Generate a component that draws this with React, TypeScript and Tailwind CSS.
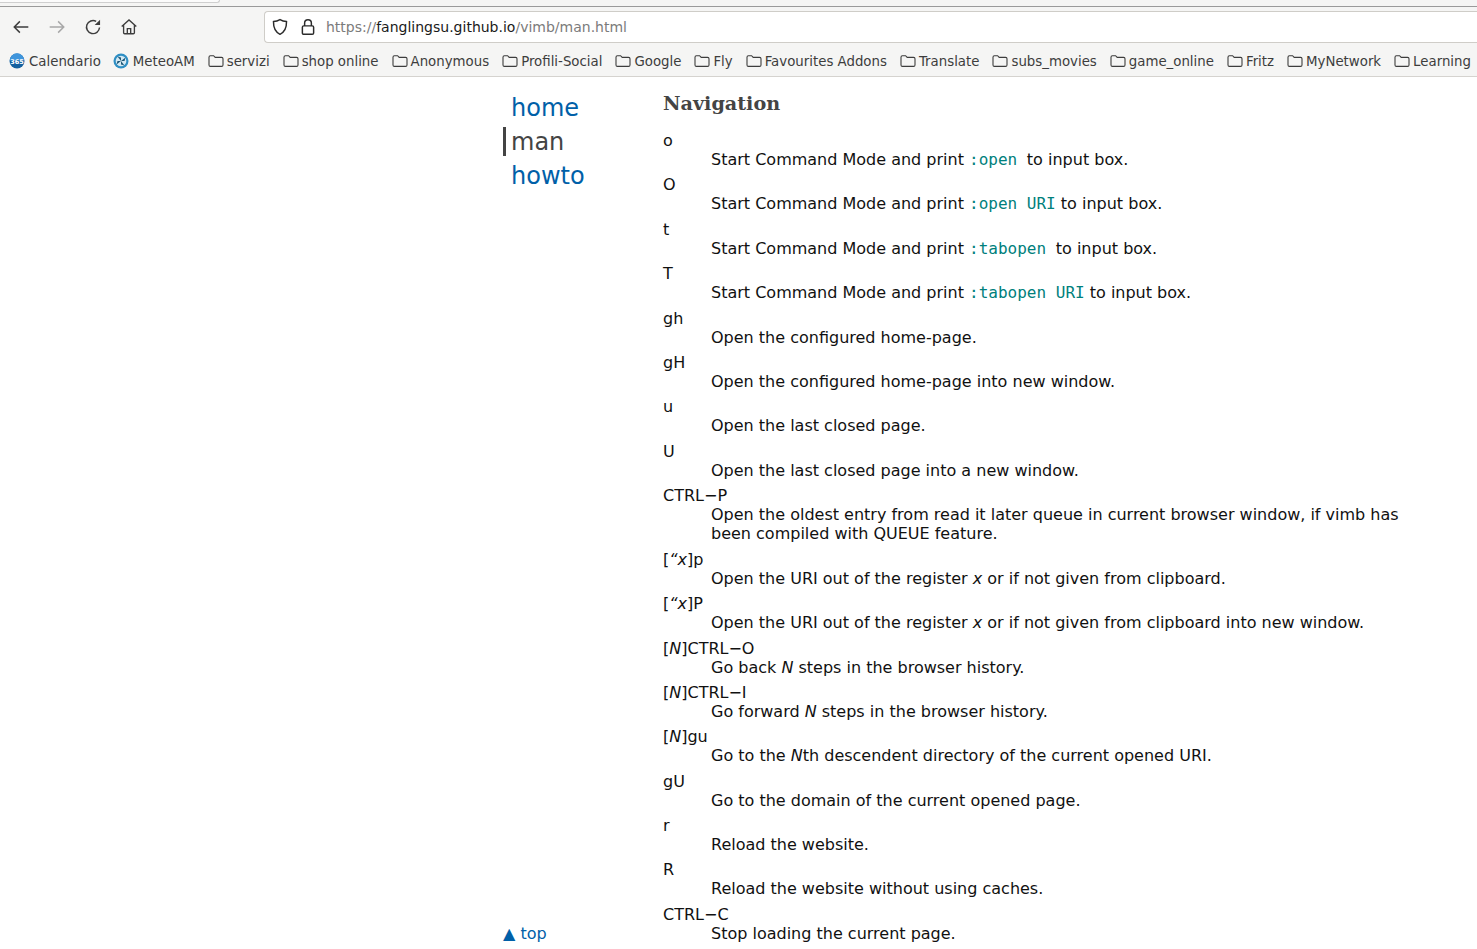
import React from "react";

const Folder = () => (
  <svg width="16" height="14" viewBox="0 0 16 14" fill="none" stroke="#3d3d3d" strokeWidth="1.1" className="shrink-0">
    <path d="M1 3.200c0-.9.6-1.500 1.400-1.500h3.200l1.600 1.700h6.400c.8 0 1.400.6 1.400 1.400v6.200c0 .8-.6 1.400-1.400 1.400H2.400c-.8 0-1.400-.6-1.400-1.400z" />
  </svg>
);

const bookmarks = ["servizi", "shop online", "Anonymous", "Profili-Social", "Google", "Fly", "Favourites Addons", "Translate", "subs_movies", "game_online", "Fritz", "MyNetwork", "Learning"];

const C = ({ children }: { children: React.ReactNode }) => (
  <code className="font-['DejaVu_Sans_Mono',monospace] text-[#00807c] text-[16px]">{children}</code>
);
const I = ({ children }: { children: React.ReactNode }) => <i>{children}</i>;

const entries: [React.ReactNode, React.ReactNode][] = [
  ["o", <>Start Command Mode and print <C>:open </C> to input box.</>],
  ["O", <>Start Command Mode and print <C>:open URI</C> to input box.</>],
  ["t", <>Start Command Mode and print <C>:tabopen </C> to input box.</>],
  ["T", <>Start Command Mode and print <C>:tabopen URI</C> to input box.</>],
  ["gh", "Open the configured home-page."],
  ["gH", "Open the configured home-page into new window."],
  ["u", "Open the last closed page."],
  ["U", "Open the last closed page into a new window."],
  ["CTRL−P", "Open the oldest entry from read it later queue in current browser window, if vimb has been compiled with QUEUE feature."],
  [<>[<I>“x</I>]p</>, <>Open the URI out of the register <I>x</I> or if not given from clipboard.</>],
  [<>[<I>“x</I>]P</>, <>Open the URI out of the register <I>x</I> or if not given from clipboard into new window.</>],
  [<>[<I>N</I>]CTRL−O</>, <>Go back <I>N</I> steps in the browser history.</>],
  [<>[<I>N</I>]CTRL−I</>, <>Go forward <I>N</I> steps in the browser history.</>],
  [<>[<I>N</I>]gu</>, <>Go to the <I>N</I>th descendent directory of the current opened URI.</>],
  ["gU", "Go to the domain of the current opened page."],
  ["r", "Reload the website."],
  ["R", "Reload the website without using caches."],
  ["CTRL−C", "Stop loading the current page."],
];

export default function App() {
  return (
    <div className="h-screen overflow-hidden bg-white font-['DejaVu_Sans',sans-serif] text-[16px] leading-[19.2px] text-[#111] flex flex-col">
      <header className="bg-[#f5f5f4] shrink-0 h-[77px] border-b border-[#d5d3cf] flex flex-col">
        <div className="h-[7px] border-b border-[#9a9a9a] shrink-0">
          <div className="h-[3px] w-[220px] bg-[#fbfbfb] border-b border-r border-[#cfcfcf] rounded-br-sm" />
        </div>
        <div className="flex items-center h-[40px] shrink-0 pl-[12px]">
          <svg width="18" height="18" viewBox="0 0 16 16" fill="none" stroke="#3d3d3d" strokeWidth="1.3" className="mr-[18px]"><path d="M14.500 8H2M7 3 2 8l5 5" /></svg>
          <svg width="18" height="18" viewBox="0 0 16 16" fill="none" stroke="#a8a8a8" strokeWidth="1.3" className="mr-[18px]"><path d="M1.500 8H14M9 3l5 5-5 5" /></svg>
          <svg width="18" height="18" viewBox="0 0 16 16" fill="none" stroke="#3d3d3d" strokeWidth="1.3" className="mr-[18px]"><path d="M13.800 8.500A5.800 5.800 0 1 1 10.800 3" /><path d="M14.300 1.500v4.800H9.500z" fill="#3d3d3d" stroke="none" /></svg>
          <svg width="18" height="18" viewBox="0 0 16 16" fill="none" stroke="#3d3d3d" strokeWidth="1.2" className="mr-[126px]"><path d="M1.500 7.600 8 1.800l6.500 5.800M3.200 6.500V13c0 .6.4 1 1 1h7.600c.6 0 1-.4 1-1V6.500M6.500 14V9.500h3V14" /></svg>
          <div className="flex-1 h-[32px] bg-white border border-[#cfcdc8] border-r-0 rounded-l-[4px] flex items-center pl-[6px] -mr-px">
            <svg width="18" height="18" viewBox="0 0 16 16" fill="none" stroke="#2b2b2b" strokeWidth="1.3" className="mr-[11px] shrink-0"><path d="M8 1.500c2 1.200 3.800 1.600 5.800 1.700.1 5.300-1.500 9.300-5.800 11.300C3.700 12.500 2.100 8.500 2.200 3.200c2-.1 3.800-.5 5.800-1.700z" /></svg>
            <svg width="16" height="18" viewBox="0 0 14 16" fill="none" stroke="#2b2b2b" strokeWidth="1.300" className="mr-[10px] shrink-0"><rect x="2" y="7" width="10" height="7.500" rx="1.200" /><path d="M4 7V4.500a3 3 0 0 1 6 0V7" /></svg>
            <span className="text-[14px] leading-[20px] text-[#7b7b7b] whitespace-nowrap">https://<span className="text-[#1a1a1a]">fanglingsu.github.io</span>/vimb/man.html</span>
          </div>
        </div>
        <div className="flex items-center flex-1 pl-[9px] text-[13.333px] text-[#3d3d3d] whitespace-nowrap gap-[13px] overflow-hidden">
          <span className="flex items-center gap-[4px] -mr-px">
            <svg width="16" height="16" viewBox="0 0 16 16"><circle cx="8" cy="8" r="7.500" fill="#14609f" /><path d="M.8 7.500a7.200 7.200 0 0 1 14.400 0z" fill="#3f95dc" /><text x="8" y="10.500" fontSize="6.500" fontWeight="700" fill="#fff" textAnchor="middle" fontFamily="'DejaVu Sans',sans-serif">365</text></svg>
            Calendario
          </span>
          <span className="flex items-center gap-[4px]">
            <svg width="16" height="16" viewBox="0 0 16 16"><circle cx="8" cy="8" r="7.500" fill="#2f8fc4" /><circle cx="8" cy="8" r="5.300" fill="#d4e9f3" /><path d="M8 8 4.500 3.500 8 4.500zM8 8l4.500-3.500-1 3.500zM8 8l3.500 4.500-3.500-1zM8 8l-4.500 3.500 1-3.500z" fill="#1f5878" /></svg>
            MeteoAM
          </span>
          {bookmarks.map((b) => (
            <span key={b} className="flex items-center gap-[3px]"><Folder />{b}</span>
          ))}
        </div>
      </header>
      <main className="relative flex-1 min-h-0 overflow-hidden flex pl-[503px]">
        <nav className="w-[160px] shrink-0 pt-[14px] text-[24px] leading-[34px]">
          <a className="block pl-[8px] text-[#0060a8]">home</a>
          <a className="block pl-[5px] pt-[1px] border-l-[3px] border-[#444] text-[#444] leading-[28px] mt-[2px] mb-[3px]">man</a>
          <a className="block pl-[8px] text-[#0060a8]">howto</a>
        </nav>
        <section className="w-[750px] shrink-0">
          <h2 className="font-['DejaVu_Serif',serif] font-bold text-[#444] text-[19.200px] leading-[23px] mt-[15px] mb-[16px]">Navigation</h2>
          <dl>
            {entries.map(([k, v], i) => (
              <div key={i} className="mb-[6.19px]">
                <dt className="leading-[19px]">{k}</dt>
                <dd className="ml-[48px]">{v}</dd>
              </div>
            ))}
          </dl>
        </section>
        <a className="absolute left-[503px] top-[847px] text-[#0060a8]">▲ top</a>
      </main>
    </div>
  );
}
